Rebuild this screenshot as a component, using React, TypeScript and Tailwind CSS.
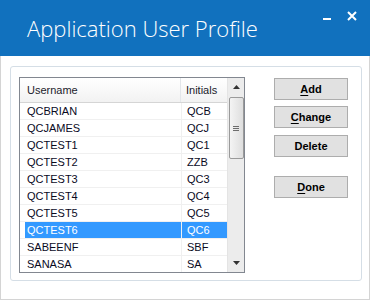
import React from "react";

const rows: [string, string][] = [
  ["QCBRIAN", "QCB"],
  ["QCJAMES", "QCJ"],
  ["QCTEST1", "QC1"],
  ["QCTEST2", "ZZB"],
  ["QCTEST3", "QC3"],
  ["QCTEST4", "QC4"],
  ["QCTEST5", "QC5"],
  ["QCTEST6", "QC6"],
  ["SABEENF", "SBF"],
  ["SANASA", "SA"],
];

function Btn({ children }: { children: React.ReactNode }) {
  return (
    <div className="w-[74px] h-[22px] bg-[#e1e1e1] border border-[#adadad] flex items-center justify-center text-[11px] font-bold text-black">
      {children}
    </div>
  );
}

export default function App() {
  return (
    <div
      className="w-[370px] h-[300px] flex flex-col bg-white overflow-hidden"
      style={{ fontFamily: '"Liberation Sans", Arial, sans-serif' }}
    >
      <div className="h-[56px] bg-[#1171be] relative shrink-0">
        <div
          className="absolute left-[27px] top-[17px] text-[22px] font-light text-white leading-none"
          style={{ fontFamily: '"Open Sans", "Noto Sans", sans-serif' }}
        >
          Application User Profile
        </div>
        <div className="absolute left-[323px] top-[18px] w-[8px] h-[2px] bg-white" />
        <svg className="absolute left-[347px] top-[11px]" width="10" height="10" viewBox="0 0 10 10">
          <path d="M1 1 L9 9 M9 1 L1 9" stroke="white" strokeWidth="2" />
        </svg>
      </div>
      <div className="flex-1 border-x border-b border-[#d4d4d4] pl-[9px] pr-[7px] pt-[10px] pb-[18px] flex">
        <div className="flex-1 border border-[#d5dee6] rounded-[3px] bg-white pl-[8px] pt-[10px] flex items-start">
          <div className="w-[226px] h-[196px] border border-[#828790] flex bg-white">
            <div className="w-[207px] flex flex-col overflow-hidden">
              <div className="h-[25px] shrink-0 flex border-b border-[#d5d5d5] bg-gradient-to-b from-white to-[#f2f2f2] text-[11px] text-[#1b1b2b]">
                <div className="w-[161px] border-r border-[#e3e6ea] flex items-center pl-[7px]">Username</div>
                <div className="flex-1 flex items-center pl-[5px]">Initials</div>
              </div>
              {rows.map(([u, i]) => {
                const sel = u === "QCTEST6";
                return (
                  <div key={u} className="h-[17px] shrink-0 flex border-b border-[#f0f0f0] text-[11px]">
                    <div
                      className={
                        "w-[156px] ml-[5px] flex items-center pl-[2px] " +
                        (sel ? "bg-[#3399ff] text-white" : "text-[#0a0a1e]")
                      }
                    >
                      {u}
                    </div>
                    <div className="w-[1px] bg-[#f0f0f0]" />
                    <div
                      className={
                        "flex-1 flex items-center pl-[5px] " +
                        (sel ? "bg-[#3399ff] text-white" : "text-[#0a0a1e]")
                      }
                    >
                      {i}
                    </div>
                  </div>
                );
              })}
            </div>
            <div className="w-[17px] bg-[#ececec] border-l border-[#e4e4e4] flex flex-col items-center">
              <div className="h-[18px] flex items-center justify-center">
                <svg width="7" height="4" viewBox="0 0 7 4">
                  <path d="M3.5 0 L7 4 L0 4 Z" fill="#333" />
                </svg>
              </div>
              <div className="w-[15px] h-[62px] mt-[1px] rounded-[2px] border border-[#9a9a9a] bg-gradient-to-r from-[#f4f4f4] to-[#dedede] flex flex-col items-center justify-center gap-[1px]">
                <div className="w-[6px] h-[1px] bg-[#6d6d6d]" />
                <div className="w-[6px] h-[1px] bg-[#6d6d6d]" />
                <div className="w-[6px] h-[1px] bg-[#6d6d6d]" />
              </div>
              <div className="flex-1" />
              <div className="h-[18px] flex items-center justify-center">
                <svg width="7" height="4" viewBox="0 0 7 4">
                  <path d="M0 0 L7 0 L3.5 4 Z" fill="#333" />
                </svg>
              </div>
            </div>
          </div>
          <div className="ml-[29px] mt-[1px] flex flex-col">
            <Btn>
              <span className="underline underline-offset-2">A</span>dd
            </Btn>
            <div className="h-[6px]" />
            <Btn>
              <span className="underline underline-offset-2">C</span>hange
            </Btn>
            <div className="h-[7px]" />
            <Btn>Delete</Btn>
            <div className="h-[19px]" />
            <Btn>
              <span className="underline underline-offset-2">D</span>one
            </Btn>
          </div>
        </div>
      </div>
    </div>
  );
}
